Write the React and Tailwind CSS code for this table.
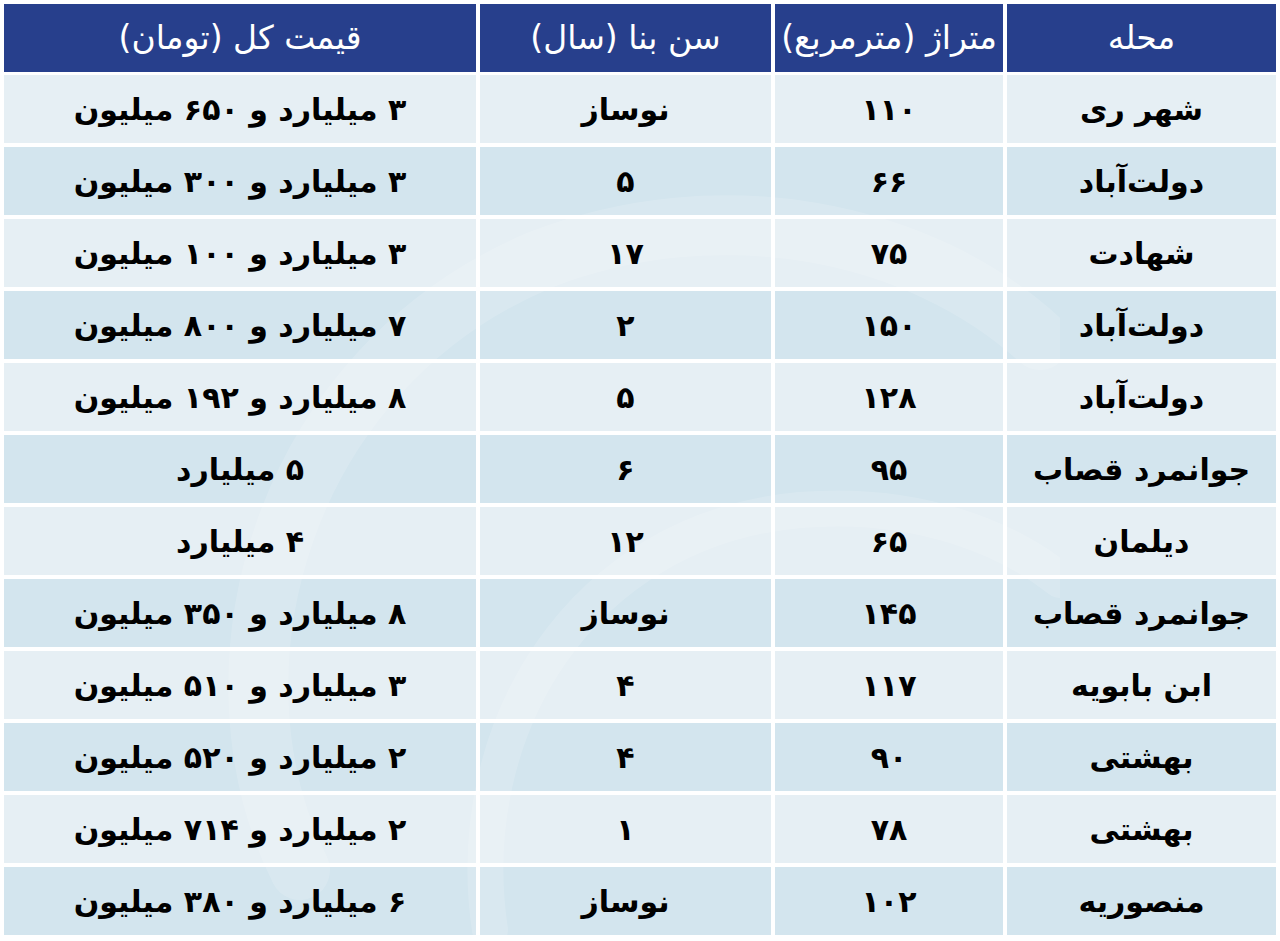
const headers = ["محله", "متراژ (مترمربع)", "سن بنا (سال)", "قیمت کل (تومان)"];

const rows = [
  ["شهر ری", "۱۱۰", "نوساز", "۳ میلیارد و ۶۵۰ میلیون"],
  ["دولت‌آباد", "۶۶", "۵", "۳ میلیارد و ۳۰۰ میلیون"],
  ["شهادت", "۷۵", "۱۷", "۳ میلیارد و ۱۰۰ میلیون"],
  ["دولت‌آباد", "۱۵۰", "۲", "۷ میلیارد و ۸۰۰ میلیون"],
  ["دولت‌آباد", "۱۲۸", "۵", "۸ میلیارد و ۱۹۲ میلیون"],
  ["جوانمرد قصاب", "۹۵", "۶", "۵ میلیارد"],
  ["دیلمان", "۶۵", "۱۲", "۴ میلیارد"],
  ["جوانمرد قصاب", "۱۴۵", "نوساز", "۸ میلیارد و ۳۵۰ میلیون"],
  ["ابن بابویه", "۱۱۷", "۴", "۳ میلیارد و ۵۱۰ میلیون"],
  ["بهشتی", "۹۰", "۴", "۲ میلیارد و ۵۲۰ میلیون"],
  ["بهشتی", "۷۸", "۱", "۲ میلیارد و ۷۱۴ میلیون"],
  ["منصوریه", "۱۰۲", "نوساز", "۶ میلیارد و ۳۸۰ میلیون"],
];

const cols = "grid grid-cols-[269px_228px_291px_472px] gap-x-[4px]";

export default function App() {
  return (
    <div
      dir="rtl"
      className="relative h-[941px] w-[1280px] overflow-hidden bg-white px-[4px] pt-[4px] font-['DejaVu_Sans',sans-serif]"
    >
      <div className={`${cols} h-[68px]`}>
        {headers.map((h) => (
          <div
            key={h}
            className="flex items-center justify-center bg-[#273f8c] text-[33px] text-white"
          >
            {h}
          </div>
        ))}
      </div>

      <div className="mt-[3px] flex flex-col gap-y-[4px]">
        {rows.map((row, i) => (
          <div key={i} className={`${cols} h-[68px]`}>
            {row.map((cell, j) => (
              <div
                key={j}
                className={`flex items-center justify-center text-[30px] font-bold text-black ${
                  i % 2 === 0 ? "bg-[#e6eff4]" : "bg-[#d3e5ee]"
                }`}
              >
                <span className="relative z-10">{cell}</span>
              </div>
            ))}
          </div>
        ))}
      </div>

      {/* faint logo watermark behind the text */}
      <svg
        className="pointer-events-none absolute left-[160px] top-[110px] opacity-[0.14]"
        width="900"
        height="831"
        viewBox="0 0 900 831"
      >
        <path
          d="M140 760 C 40 560, 120 260, 380 150 C 560 80, 760 120, 880 230"
          fill="none"
          stroke="#ffffff"
          strokeWidth="60"
          strokeLinecap="round"
        />
        <path
          d="M330 820 C 300 620, 420 420, 640 400 C 760 390, 850 430, 900 470"
          fill="none"
          stroke="#ffffff"
          strokeWidth="36"
          strokeLinecap="round"
        />
      </svg>
    </div>
  );
}
